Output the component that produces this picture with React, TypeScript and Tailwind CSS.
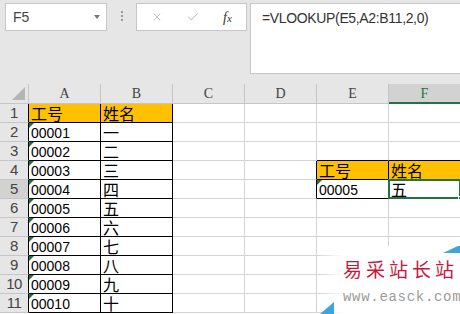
import { X, Check } from "lucide-react";

const cols = ["A", "B", "C", "D", "E", "F"];

const data: Record<number, Record<string, string>> = {
  1: { A: "工号", B: "姓名" },
  2: { A: "00001", B: "一" },
  3: { A: "00002", B: "二" },
  4: { A: "00003", B: "三", E: "工号", F: "姓名" },
  5: { A: "00004", B: "四", E: "00005", F: "五" },
  6: { A: "00005", B: "五" },
  7: { A: "00006", B: "六" },
  8: { A: "00007", B: "七" },
  9: { A: "00008", B: "八" },
  10: { A: "00009", B: "九" },
  11: { A: "00010", B: "十" },
};

const inTable = (r: number, c: string) =>
  (r >= 1 && r <= 11 && (c === "A" || c === "B")) ||
  ((r === 4 || r === 5) && (c === "E" || c === "F"));

const nextCol = (c: string) => cols[cols.indexOf(c) + 1] ?? "";

function Cell({ r, c }: { r: number; c: string }) {
  const text = data[r]?.[c] ?? "";
  const isNum = /^\d/.test(text);
  const fill = (r === 1 && (c === "A" || c === "B")) || (r === 4 && (c === "E" || c === "F"));
  const right = inTable(r, c) || inTable(r, nextCol(c)) ? "border-r-black" : "border-r-[#d4d4d4]";
  const bottom = inTable(r, c) || inTable(r + 1, c) ? "border-b-black" : "border-b-[#d4d4d4]";
  const selected = r === 5 && c === "F";

  return (
    <div
      className={`relative h-[19px] border-r border-b ${right} ${bottom} ${fill ? "bg-[#ffc000]" : "bg-white"} px-[2px] whitespace-nowrap text-black`}
    >
      {isNum && (
        <span className="absolute left-0 top-0 border-t-[5px] border-r-[5px] border-t-[#1e7145] border-r-transparent" />
      )}
      {text &&
        (isNum ? (
          <span className="block pt-[2px] text-[14px] leading-[16px]">{text}</span>
        ) : (
          <span className="block pt-[1px] text-[16px] leading-[16px] font-['Noto_Sans_CJK_SC',sans-serif]">
            {text}
          </span>
        ))}
      {selected && (
        <>
          <span className="absolute -left-[1px] -top-[1px] -right-[1px] -bottom-[1px] border-2 border-[#217346]" />
          <span className="absolute -right-[4px] -bottom-[4px] h-[6px] w-[6px] border border-white bg-[#217346]" />
        </>
      )}
    </div>
  );
}

export default function App() {
  return (
    <div className="relative h-[314px] w-[460px] overflow-hidden bg-white font-['Liberation_Sans','Noto_Sans_CJK_SC',sans-serif]">
      {/* formula bar */}
      <div className="flex h-[84px] items-start bg-[#e6e6e6] pt-[3px]">
        <div className="relative ml-[5px] flex h-[28px] w-[102px] items-center border border-[#c6c6c6] bg-white pl-[7px] text-[14px] text-[#444]">
          F5
          <span className="absolute right-[6px] top-[11px] border-x-[3px] border-t-[4px] border-x-transparent border-t-[#777]" />
        </div>
        <div className="ml-[14px] mt-[8px] flex flex-col gap-[2px]">
          <span className="h-[2px] w-[2px] bg-[#9a9a9a]" />
          <span className="h-[2px] w-[2px] bg-[#9a9a9a]" />
          <span className="h-[2px] w-[2px] bg-[#9a9a9a]" />
        </div>
        <div className="ml-[13px] flex h-[28px] w-[111px] items-center border border-[#c6c6c6] bg-white">
          <X size={12} strokeWidth={1.4} className="ml-[14px] text-[#b0b0b0]" />
          <Check size={14} strokeWidth={1.6} className="ml-[23px] text-[#b0b0b0]" />
          <span className="ml-[23px] font-['Liberation_Serif',serif] text-[14px] italic text-[#333]">
            f<span className="text-[11px]">x</span>
          </span>
        </div>
        <div className="ml-[3px] h-[71px] flex-1 border border-r-0 border-[#c6c6c6] bg-white pl-[11px] pt-[4px] text-[14px] tracking-[-0.35px] text-[#333]">
          =VLOOKUP(E5,A2:B11,2,0)
        </div>
      </div>

      {/* sheet */}
      <div className="grid w-[461px] grid-cols-[29px_repeat(6,72px)]">
        <div className="relative h-[20px] border-r border-b border-[#c6c6c6] bg-[#e6e6e6]">
          <svg width="13" height="13" className="absolute right-[3px] bottom-[3px]">
            <path d="M13 0 L13 13 L0 13 Z" fill="#b4b4b4" />
          </svg>
        </div>
        {cols.map((c) =>
          c === "F" ? (
            <div
              key={c}
              className="flex h-[20px] items-center justify-center border-r border-r-[#c6c6c6] border-b-2 border-b-[#217346] bg-[#d2d2d2] font-['Liberation_Serif',serif] text-[14px] text-[#217346]"
            >
              {c}
            </div>
          ) : (
            <div
              key={c}
              className="flex h-[20px] items-center justify-center border-r border-b border-[#c6c6c6] bg-[#e6e6e6] font-['Liberation_Serif',serif] text-[14px] text-[#444]"
            >
              {c}
            </div>
          )
        )}

        {Array.from({ length: 11 }, (_, i) => i + 1).map((r) => (
          <div key={r} className="contents">
            <div
              className={`flex h-[19px] items-center justify-center border-r border-b border-b-[#c6c6c6] ${
                inTable(r, "A") ? "border-r-black" : "border-r-[#c6c6c6]"
              } ${r === 5 ? "bg-[#d2d2d2]" : "bg-[#e6e6e6]"} text-[15px] tracking-[-0.5px] text-[#444]`}
            >
              {r}
            </div>
            {cols.map((c) => (
              <Cell key={c} r={r} c={c} />
            ))}
          </div>
        ))}
      </div>

      {/* watermark */}
      <div className="absolute left-[318px] top-[246px] h-[68px] w-[142px] bg-linear-to-r from-transparent to-white to-[18%]">
        <svg width="142" height="68" className="absolute left-0 top-0">
          <path d="M125 7 L142 -1 L142 7 Z" fill="#3aa6dc" />
          <path d="M2 68 L16 56 L16 68 Z" fill="#3aa6dc" />
        </svg>
        <div className="absolute left-[25px] top-[11px] whitespace-nowrap font-['Noto_Sans_CJK_SC',serif] text-[19px] leading-[24px] tracking-[4px] text-[#c8173a]">
          易采站长站
        </div>
        <div className="absolute left-[25px] top-[43px] whitespace-nowrap font-['Liberation_Mono',monospace] text-[14px] leading-[16px] tracking-[0.7px] text-[#9c9c9c]">
          www.easck.com
        </div>
      </div>
    </div>
  );
}
